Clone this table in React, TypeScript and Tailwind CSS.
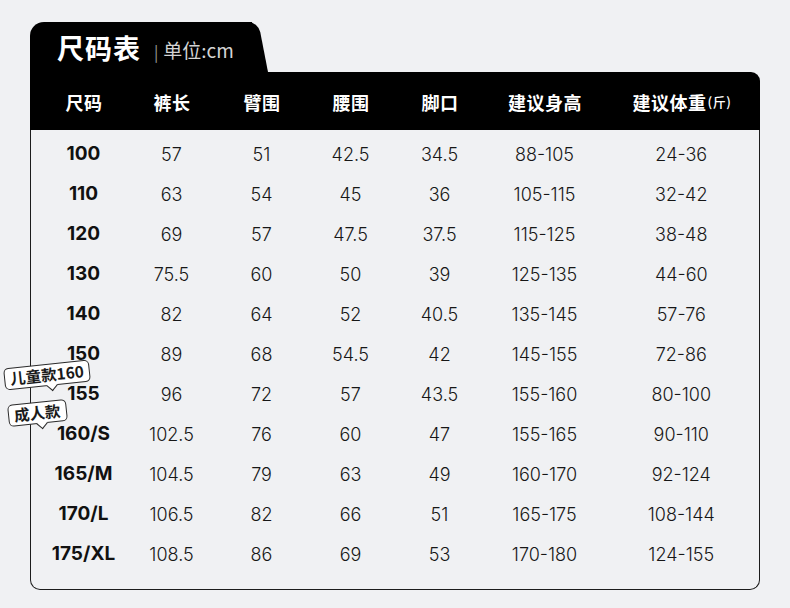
const COLS = "grid grid-cols-[100px_76px_104px_74px_104px_106px_1fr] items-center";

const HEAD = ["尺码", "裤长", "臂围", "腰围", "脚口", "建议身高"];

const ROWS: string[][] = [
  ["100", "57", "51", "42.5", "34.5", "88-105", "24-36"],
  ["110", "63", "54", "45", "36", "105-115", "32-42"],
  ["120", "69", "57", "47.5", "37.5", "115-125", "38-48"],
  ["130", "75.5", "60", "50", "39", "125-135", "44-60"],
  ["140", "82", "64", "52", "40.5", "135-145", "57-76"],
  ["150", "89", "68", "54.5", "42", "145-155", "72-86"],
  ["155", "96", "72", "57", "43.5", "155-160", "80-100"],
  ["160/S", "102.5", "76", "60", "47", "155-165", "90-110"],
  ["165/M", "104.5", "79", "63", "49", "160-170", "92-124"],
  ["170/L", "106.5", "82", "66", "51", "165-175", "108-144"],
  ["175/XL", "108.5", "86", "69", "53", "170-180", "124-155"],
];

// speech-bubble tags on the left edge, slightly tilted
function Bubble({ label, className }: { label: string; className: string }) {
  return (
    <div className={`absolute -rotate-6 ${className}`}>
      <div className="relative rounded-[5px] border-[1.5px] border-[#2a2a2a] bg-white px-[5px] h-[22px] flex items-center text-[15.5px] font-semibold leading-none text-[#1a1a1a] whitespace-nowrap font-['Noto_Sans_CJK_SC',sans-serif]">
        {label}
        <span className="absolute left-1/2 -bottom-[5px] w-[8px] h-[8px] rotate-45 bg-white border-r-[1.5px] border-b-[1.5px] border-[#2a2a2a]" />
      </div>
    </div>
  );
}

export default function App() {
  return (
    <div className="w-[790px] h-[608px] bg-[#f0f1f3] pt-[22px] pl-[30px] relative font-['Inter','Noto_Sans_CJK_SC',sans-serif]">
      <div className="w-[730px]">
        <div className="flex h-[50px]">
          <div className="w-[222px] bg-black rounded-tl-[14px] flex items-center pl-[27px] pt-[3px] gap-[13px]">
            <span className="text-white text-[27px] font-bold tracking-[1px] font-['Noto_Sans_CJK_SC',sans-serif]">尺码表</span>
            <span className="text-[#d4d4d4] text-[19px] pt-[3px] font-['Noto_Sans_CJK_SC',sans-serif]">
              <span className="mr-[5px] text-[16px] text-[#9a9a9a]">|</span>单位:cm
            </span>
          </div>
          <div className="w-[20px] -ml-[4px] bg-black rounded-tr-[10px] skew-x-[11deg] origin-bottom-left" />
        </div>

        <div className={`${COLS} h-[58px] bg-black rounded-tr-[9px] pl-[4px] text-white text-[18px] tracking-[0.5px] font-bold font-['Noto_Sans_CJK_SC',sans-serif]`}>
          {HEAD.map((h) => (
            <div key={h} className="text-center pt-[2px]">{h}</div>
          ))}
          <div className="text-center pl-[6px] pt-[2px] whitespace-nowrap">
            建议体重<sup className="text-[13px] font-medium relative -top-[3px] ml-[1px]">(斤)</sup>
          </div>
        </div>

        <div className="border-x-[1.5px] border-b-[1.5px] border-[#1c1c1c] rounded-b-[10px] pt-[4px] pb-[15px] pl-[2.5px] text-[#161616]">
          {ROWS.map((r) => (
            <div key={r[0]} className={`${COLS} h-[40px] text-[18px]`}>
              {r.map((v, i) => (
                <div
                  key={i}
                  className={`text-center ${i === 0 ? "font-bold text-[19px] text-[#111]" : "font-light"} ${i === 6 ? "pl-[6px]" : ""}`}
                >
                  {v}
                </div>
              ))}
            </div>
          ))}
        </div>
      </div>

      <Bubble label="儿童款160" className="left-[4px] top-[364px]" />
      <Bubble label="成人款" className="left-[8px] top-[402px]" />
    </div>
  );
}
